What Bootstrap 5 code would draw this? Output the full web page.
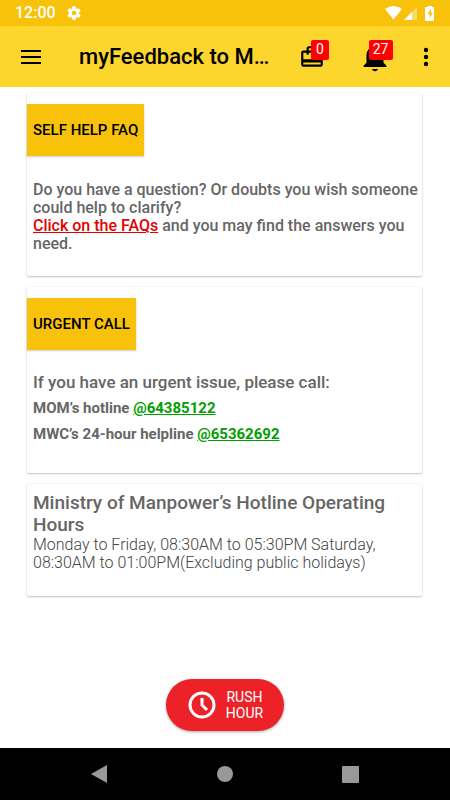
<!DOCTYPE html>
<html lang="en">
<head>
<meta charset="utf-8">
<meta name="viewport" content="width=device-width, initial-scale=1">
<title>myFeedback to MOM</title>
<link href="https://cdn.jsdelivr.net/npm/bootstrap@5.3.0/dist/css/bootstrap.min.css" rel="stylesheet">
<style>
  body { font-family: Roboto, sans-serif; color: #666; background: #fff; }
  .status-bar { height: 26px; background: #f9c20a; color: #fff; padding: 0 14px 0 15px; font-size: 16px; line-height: 28px; }
  .app-bar { height: 61px; background: #fcd62d; color: #000; padding: 0 16px 0 18px; }
  .app-title { font-size: 22px; line-height: 32px; font-weight: 500; margin-left: 35px; width: 192px; white-space: nowrap; }
  .icon-btn { border: 0; background: none; color: #000; padding: 0; display: flex; align-items: center; justify-content: center; position: relative; }
  .alerts { margin-left: 6px; }
  .count { position: absolute; background: #f00; color: #fff; font-size: 14px; line-height: 19px; height: 20px; border-radius: 2px; text-align: center; }
  .count-trips { left: 12px; top: -4px; width: 18px; }
  .count-alerts { left: 11px; top: 0; width: 24px; }
  .content { padding: 6px 28px 0 27px; gap: 11px; }
  .panel { border: 0; border-radius: 2px; color: #666; box-shadow: 0 1px 2px rgba(0,0,0,.22), 0 0 2px rgba(0,0,0,.1); }
  .panel-faq { padding: 11px 0 23px; }
  .panel-urgent { padding: 11px 0 26px; }
  .panel-hours { padding: 8px 6px 24px; }
  .panel-body { padding: 0 0 0 6px; }
  .tab-btn { height: 52px; padding: 0 6px; border: 0; border-radius: 0; background: #f9c20a; color: #000; font-size: 15px; box-shadow: 0 1px 2px rgba(0,0,0,.2); }
  .faq-text { font-size: 16px; line-height: 18px; font-weight: 500; margin-top: 25px; }
  .faq-text a { color: #e60000; }
  .urgent-head { font-size: 17px; line-height: 24px; font-weight: 500; margin-top: 20px; margin-bottom: 1px; }
  .urgent-line { font-size: 15px; line-height: 26px; font-weight: 700; }
  .urgent-line a { color: #00a000; }
  .medium { font-weight: 500; }
  .hours-head { font-size: 19px; line-height: 22px; font-weight: 500; }
  .hours-text { font-size: 16px; line-height: 18px; font-weight: 300; color: #444; }
  .rush { height: 52px; width: 118px; border: 0; border-radius: 26px; background: #ed2228; color: #fff; padding: 0; font-size: 14px; line-height: 16px; box-shadow: 0 1px 3px rgba(0,0,0,.35); margin-bottom: 17px; }
  .nav-keys { height: 52px; background: #000; padding: 0 75px 0 74px; }
  .nav-keys button { color: #999; }
</style>
</head>
<body>
<div class="d-flex flex-column min-vh-100">
  <div class="status-bar d-flex align-items-center">
    <span class="medium">12:00</span>
    <svg class="ms-2 me-auto" width="24" height="16" viewBox="0 0 36 24" fill="#fff" aria-hidden="true"><path transform="translate(3)" d="M19.4 13a7.500 7.500 0 0 0 0-2l2.100-1.650a.5.5 0 0 0 .12-.64l-2-3.460a.5.5 0 0 0-.6-.22l-2.500 1a7.300 7.300 0 0 0-1.700-.98l-.38-2.650A.5.5 0 0 0 14 2h-4a.5.5 0 0 0-.5.42l-.38 2.650a7.300 7.300 0 0 0-1.700.98l-2.500-1a.5.5 0 0 0-.6.22l-2 3.460a.5.5 0 0 0 .12.64L4.600 11a7.500 7.500 0 0 0 0 2l-2.100 1.650a.5.5 0 0 0-.12.64l2 3.460c.12.22.38.3.6.22l2.500-1c.52.4 1.080.73 1.700.98l.38 2.650c.03.24.25.4.5.4h4c.25 0 .46-.16.5-.4l.38-2.650c.62-.25 1.180-.58 1.700-.98l2.500 1c.22.08.48 0 .6-.22l2-3.460a.5.5 0 0 0-.12-.64zM12 15.500a3.500 3.500 0 1 1 0-7 3.500 3.500 0 0 1 0 7z"/></svg>
    <svg width="51" height="16" viewBox="0 0 51 16" fill="#fff" aria-hidden="true"><path d="M0 4Q8.500-2 17 4L8.500 14.500z"/><path d="M19 15 32 2v13z" opacity=".4"/><path d="M19 15l8-8v8z"/><path fill-rule="evenodd" d="M41 2h2V1h4v1h2v13q0 1-1 1h-7q-1 0-1-1V3q0-1 1-1zm5 2-3.500 5h2v4l3.500-5h-2z"/></svg>
  </div>
  <header class="app-bar d-flex align-items-center">
    <button class="icon-btn" aria-label="Menu"><svg width="26" height="26" viewBox="0 0 26 26" stroke="#000" stroke-width="2"><path d="M3 7h20M3 13h20M3 19h20"/></svg></button>
    <h1 class="app-title mb-0">myFeedback to M…</h1>
    <div class="d-flex align-items-center justify-content-between flex-grow-1 ps-4 ms-1">
      <button class="icon-btn" aria-label="Trips"><svg width="26" height="26" viewBox="0 0 24 24"><path d="M20 6h-3V4c0-1.110-.89-2-2-2H9c-1.110 0-2 .89-2 2v2H4c-1.110 0-2 .89-2 2v11c0 1.110.89 2 2 2h16c1.110 0 2-.89 2-2V8c0-1.110-.89-2-2-2zM9 4h6v2H9V4zm11 15H4v-2h16v2zm0-5H4V8h3v2h2V8h6v2h2V8h3v6z"/></svg><span class="count count-trips">0</span></button>
      <button class="icon-btn alerts" aria-label="Notifications"><svg width="34" height="34" viewBox="0 0 24 24"><path d="M10 20.500h4c0 .8-.9 1.500-2 1.500s-2-.7-2-1.500zM18 16v-5c0-3.070-1.640-5.640-4.500-6.320V4c0-.83-.67-1.500-1.500-1.500s-1.500.67-1.500 1.500v.68C7.630 5.360 6 7.920 6 11v5l-2 2v1h16v-1l-2-2z"/></svg><span class="count count-alerts">27</span></button>
      <button class="icon-btn" aria-label="More options"><svg width="16" height="26" viewBox="0 0 16 26"><circle cx="8" cy="6" r="2.200"/><circle cx="8" cy="13" r="2.200"/><circle cx="8" cy="20" r="2.200"/></svg></button>
    </div>
  </header>
  <main class="content d-flex flex-column flex-grow-1">
    <section class="card panel panel-faq">
      <div><button class="tab-btn btn medium">SELF HELP FAQ</button></div>
      <div class="panel-body"><p class="faq-text mb-0">Do you have a question? Or doubts you wish someone could help to clarify?<br><a href="#faq">Click on the FAQs</a> and you may find the answers you need.</p></div>
    </section>
    <section class="card panel panel-urgent">
      <div><button class="tab-btn btn medium">URGENT CALL</button></div>
      <div class="panel-body">
        <h2 class="urgent-head">If you have an urgent issue, please call:</h2>
        <p class="urgent-line mb-0">MOM’s hotline <a href="tel:64385122">@64385122</a></p>
        <p class="urgent-line mb-0">MWC’s 24-hour helpline <a href="tel:65362692">@65362692</a></p>
      </div>
    </section>
    <section class="card panel panel-hours">
      <h2 class="hours-head mb-0">Ministry of Manpower’s Hotline Operating Hours</h2>
      <p class="hours-text mb-0">Monday to Friday, 08:30AM to 05:30PM Saturday, 08:30AM to 01:00PM(Excluding public holidays)</p>
    </section>
    <button class="rush btn d-flex align-items-center justify-content-center mx-auto mt-auto">
      <svg class="me-2" width="32" height="32" viewBox="0 0 32 32" fill="none" stroke="#fff" stroke-width="3" aria-hidden="true"><circle cx="16" cy="16" r="12"/><path d="M16 9v7l5 5"/></svg>
      <span>RUSH<br>HOUR</span>
    </button>
  </main>
  <nav class="nav-keys d-flex align-items-center justify-content-between" aria-label="System">
    <button class="icon-btn" aria-label="Back"><svg width="50" height="20" viewBox="0 0 50 20" fill="currentColor"><path d="M17 10 33 1v18z"/></svg></button>
    <button class="icon-btn" aria-label="Home"><svg width="50" height="20" viewBox="0 0 50 20" fill="currentColor"><circle cx="25" cy="10" r="8"/></svg></button>
    <button class="icon-btn" aria-label="Recent apps"><svg width="50" height="20" viewBox="0 0 50 20" fill="currentColor"><rect x="17" y="2" width="17" height="17" rx="1"/></svg></button>
  </nav>
</div>
<script src="https://cdn.jsdelivr.net/npm/bootstrap@5.3.0/dist/js/bootstrap.bundle.min.js"></script>
</body>
</html>
